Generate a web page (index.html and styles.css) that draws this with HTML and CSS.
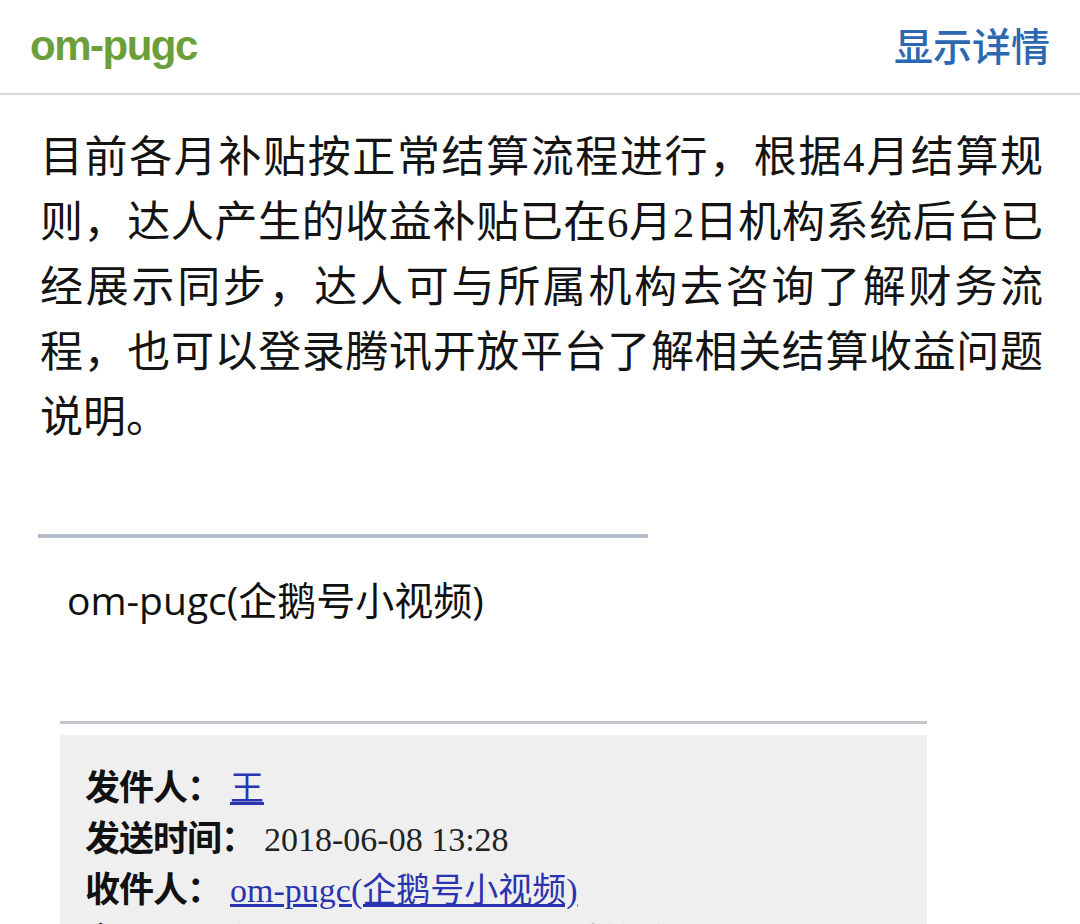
FILE: index.html
```html
<!DOCTYPE html>
<html lang="zh-CN">
<head>
<meta charset="utf-8">
<title>om-pugc</title>
<link rel="stylesheet" href="styles.css">
</head>
<body>
<div class="page">
  <header class="topbar">
    <div class="sender">om-pugc</div>
    <a class="detail">显示详情</a>
  </header>
  <p class="content">目前各月补贴按正常结算流程进行，根据4月结算规则，达人产生的收益补贴已在6月2日机构系统后台已经展示同步，达人可与所属机构去咨询了解财务流程，也可以登录腾讯开放平台了解相关结算收益问题说明。</p>
  <div class="rule rule-sig"></div>
  <div class="signature">om-pugc(企鹅号小视频)</div>
  <div class="rule rule-quote"></div>
  <div class="quote">
    <div class="row"><span class="label">发件人：</span><a class="link">王</a></div>
    <div class="row"><span class="label">发送时间：</span><span class="value">2018-06-08 13:28</span></div>
    <div class="row"><span class="label">收件人：</span><a class="link">om-pugc(企鹅号小视频)</a></div>
    <div class="row"><span class="label">主题：</span><span class="value">回复：关于达人收益补贴结算的咨询 (om-pugc)</span></div>
  </div>
</div>
</body>
</html>
```
FILE: styles.css
```css
html, body {
  margin: 0;
  padding: 0;
  background: #ffffff;
}
.page {
  width: 1080px;
  height: 924px;
  overflow: hidden;
  font-family: "Noto Sans CJK SC", sans-serif;
}
.topbar {
  height: 93px;
  border-bottom: 2px solid #dadada;
  display: flex;
  align-items: center;
  justify-content: space-between;
  padding: 0 30px;
}
.sender {
  font-family: "Liberation Sans", Arial, sans-serif;
  font-weight: bold;
  font-size: 42px;
  letter-spacing: -1.5px;
  color: #6c9f3b;
  line-height: 50px;
  margin-top: -2px;
}
.detail {
  font-family: "Noto Sans CJK SC", sans-serif;
  font-size: 39px;
  font-weight: 500;
  color: #2c68b2;
  line-height: 50px;
  margin-top: -6px;
}
.content {
  margin: 30px 0 0 40px;
  width: 1003px;
  font-family: "Liberation Serif", "Noto Sans CJK SC", serif;
  font-size: 43px;
  line-height: 65px;
  color: #141414;
  text-align: justify;
}
.rule {
  height: 4px;
}
.rule-sig {
  margin: 84px 0 0 38px;
  width: 610px;
  background: #b5bccb;
}
.signature {
  margin: 37px 0 0 67px;
  font-family: "Open Sans", "Noto Sans CJK SC", sans-serif;
  font-size: 39px;
  line-height: 50px;
  color: #111111;
}
.rule-quote {
  margin: 96px 0 0 60px;
  width: 867px;
  height: 3px;
  background: #c6c6ce;
}
.quote {
  margin: 11px 0 0 60px;
  width: 842px;
  padding: 24px 0 0 25px;
  height: 400px;
  background: #efefef;
}
.row {
  height: 51px;
  line-height: 51px;
  font-size: 34px;
  white-space: nowrap;
}
.label {
  font-family: "Noto Sans CJK TC", "Noto Sans CJK SC", sans-serif;
  font-weight: bold;
  font-size: 35px;
  letter-spacing: -1px;
  margin-right: 9px;
  color: #111111;
}
.value {
  font-family: "Liberation Serif", "Noto Sans CJK SC", serif;
  color: #222222;
}
.link {
  font-family: "Liberation Serif", "Noto Sans CJK SC", serif;
  color: #2b34b0;
  text-decoration: underline;
}
```
